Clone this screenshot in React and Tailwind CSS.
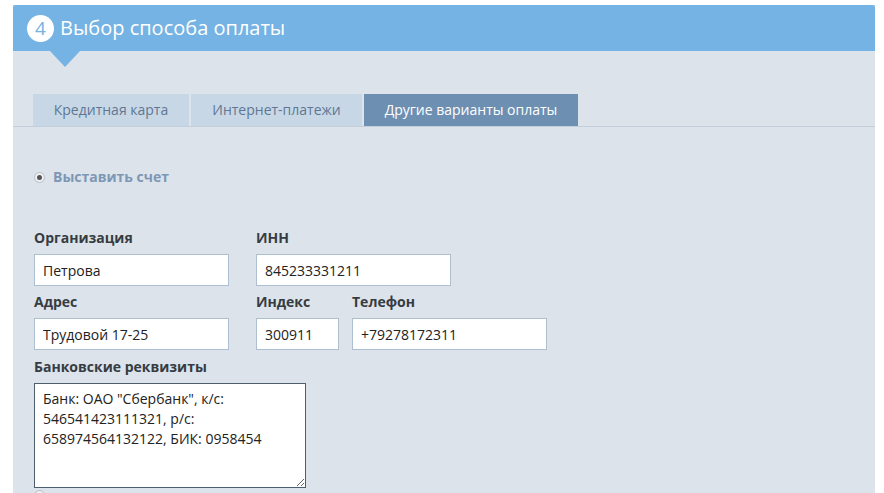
import React from 'react';

const font = { fontFamily: '"Open Sans", "Noto Sans", sans-serif' };

function Field({ label, value, width }) {
  return (
    <div className="flex flex-col">
      <label className="h-5 text-sm font-bold leading-5 text-[#363c42]">{label}</label>
      <input
        readOnly
        value={value}
        className={`mt-1.5 h-8 border border-[#aebfcf] bg-white px-2 text-sm text-[#222] outline-none ${width}`}
      />
    </div>
  );
}

function Radio({ checked }) {
  return (
    <span className="flex h-[11px] w-[11px] items-center justify-center rounded-full border border-[#b9bfc6] bg-[#eef0f2]">
      {checked && <span className="h-[5px] w-[5px] rounded-full bg-[#555]" />}
    </span>
  );
}

export default function App() {
  return (
    <div className="h-[493px] overflow-hidden bg-white pt-[5px]" style={font}>
      <div className="relative ml-[13px] w-[862px] bg-[#dce3eb]">
        {/* header */}
        <div className="flex h-[46px] items-center rounded-t-[2px] bg-[#74b3e3] pl-[14px]">
          <span className="flex h-[27px] w-[27px] items-center justify-center rounded-full bg-white text-[19px] leading-none text-[#74b3e3]">
            4
          </span>
          <h1 className="ml-[6px] text-[20px] leading-none text-white">Выбор способа оплаты</h1>
        </div>
        <div className="absolute left-[37px] top-[46px] h-0 w-0 border-x-[15px] border-t-[16px] border-x-transparent border-t-[#74b3e3]" />

        <div className="pt-[43px]">
          <div className="flex gap-[2px] border-b border-[#c4cdda] pl-5">
            <div className="flex h-8 w-[156px] items-center justify-center bg-[#c8d7e6] text-sm text-[#5f7794]">Кредитная карта</div>
            <div className="flex h-8 w-[171px] items-center justify-center bg-[#c8d7e6] text-sm text-[#5f7794]">Интернет-платежи</div>
            <div className="flex h-8 w-[214px] items-center justify-center bg-[#6d8fb2] text-sm text-white">Другие варианты оплаты</div>
          </div>

          <div className="mt-10 flex items-center gap-[8px] pl-[21px]">
            <Radio checked />
            <span className="text-sm font-bold leading-5 text-[#7d97b4]">Выставить счет</span>
          </div>

          <div className="mt-[41px] flex flex-col gap-1.5 pl-[21px]">
            <div className="flex gap-[27px]">
              <Field label="Организация" value="Петрова" width="w-[195px]" />
              <Field label="ИНН" value="845233331211" width="w-[195px]" />
            </div>
            <div className="flex gap-[27px]">
              <Field label="Адрес" value="Трудовой 17-25" width="w-[195px]" />
              <div className="flex gap-[13px]">
                <Field label="Индекс" value="300911" width="w-[83px]" />
                <Field label="Телефон" value="+79278172311" width="w-[195px]" />
              </div>
            </div>
            <div className="mt-[1px] flex flex-col">
              <label className="h-5 text-sm font-bold leading-5 text-[#363c42]">Банковские реквизиты</label>
              <textarea
                readOnly
                value={'Банк: ОАО "Сбербанк", к/с:\n546541423111321, р/с:\n658974564132122, БИК: 0958454'}
                className="mt-1.5 h-[105px] w-[272px] border border-[#4d5f6e] bg-white px-2 py-[5px] text-sm leading-5 text-[#222] outline-none"
              />
            </div>
            <div className="-mt-[4px] flex items-center">
              <Radio />
            </div>
          </div>
        </div>
      </div>
    </div>
  );
}
